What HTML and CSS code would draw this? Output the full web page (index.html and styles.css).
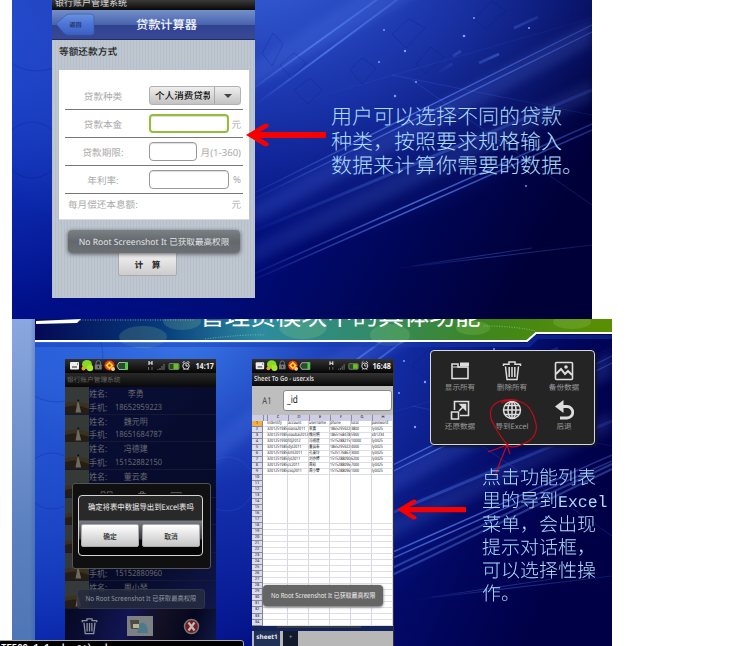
FILE: index.html
```html
<!DOCTYPE html>
<html lang="zh-CN">
<head>
<meta charset="utf-8">
<title>银行账户管理系统</title>
<link rel="stylesheet" href="styles.css">
</head>
<body>
<svg class="defs" width="0" height="0">
  <defs>
    <linearGradient id="beam" x1="0" y1="1" x2="1" y2="0"><stop offset="0" stop-color="#5f8cff" stop-opacity="0"/><stop offset=".5" stop-color="#5580f5" stop-opacity=".75"/><stop offset="1" stop-color="#5580ff" stop-opacity=".3"/></linearGradient>
    <filter id="soft" x="-20%" y="-20%" width="140%" height="140%"><feGaussianBlur stdDeviation="4"/></filter>
    <filter id="fine"><feGaussianBlur stdDeviation=".6"/></filter>
    <symbol id="rays" viewBox="0 0 580 319">
      <g filter="url(#soft)" fill="#6c95ff">
        <path d="M355-10H415L235 90L70 225V190L230 70Z" opacity=".16"/>
        <path d="M580 20V45L240 225V205Z" opacity=".15"/>
        <path d="M580 80V100L240 265V245Z" opacity=".13"/>
      </g>
      <g stroke="url(#beam)" fill="none" filter="url(#fine)">
        <path d="M243 87L370 -4M243 105L390 -4" stroke-width="2"/>
        <path d="M243 115L580 18" opacity=".15"/>
        <path d="M230 199L580 25M230 205L580 32" stroke-width="1.300"/>
        <path d="M230 279L580 124M230 285L580 130" stroke-width="1.500"/>
        <path d="M230 236L580 90" stroke-width="3" opacity=".5"/>
        <path d="M380 269L580 245M400 266L520 248" opacity=".5"/>
        <path d="M424 74L440 64M441 56L449 51M467 63L487 54M502 28L526 17" stroke-width="3" opacity=".6"/>
        <path d="M380 75L580 115M400 80L580 205" opacity=".25"/>
      </g>
      <g fill="none" stroke="#001070" opacity=".22">
        <path d="M250 53l11-20 10 11-11 22zM268 65l14-12 12 10-15 15zM282 90l16-12 12 12-14 14zM338 70l12-12 14 10-14 16zM380 34l17-15 16 9-19 20zM404 64l15-17 13 10-18 16zM462 19l17-18 15 10-20 18z"/>
        <circle cx="20" cy="150" r="28"/><circle cx="25" cy="25" r="46"/>
      </g>
      <g fill="#7da0ff"><circle cx="372" cy="30" r="1"/><circle cx="393" cy="51" r="1.200"/><circle cx="452" cy="36" r="1.300"/><circle cx="462" cy="18" r="1"/><circle cx="367" cy="62" r="1"/><circle cx="383" cy="96" r="1.200"/><circle cx="404" cy="82" r="1"/><circle cx="514" cy="186" r=".9"/><circle cx="517" cy="28" r="1"/></g>
    </symbol>
    <symbol id="arrow" viewBox="0 0 80 24">
      <path d="M0 12L18 1Q22-.5 23 3L21 5L14 9H80V15H14L21 19L23 21Q22 24.500 18 23Z" fill="#f80000"/>
    </symbol>
    <symbol id="trash" viewBox="0 0 20 20"><path d="M1.500 5V3.200H7V1H13V3.200H18.500V5M3.500 5.500L5 18.500H15L16.500 5.500M7.200 6V16M10 6V16M12.800 6V16" fill="none" stroke="currentColor" stroke-width="1.500"/></symbol>
    <symbol id="status" viewBox="0 0 151 14">
      <rect x="5" y="3" width="9" height="7.500" rx="1" fill="#eee"/><path d="M7 8h5M12 5h1" stroke="#222"/>
      <ellipse cx="22" cy="5.500" rx="5" ry="4.500" fill="#83db23"/><circle cx="25" cy="9" r="3.200" fill="#a6e72a"/><circle cx="18.500" cy="9.500" r="2" fill="#ff9b1a"/>
      <path d="M31 6V4a2.300 2.300 0 0 1 4.600 0V6" fill="none" stroke="#777"/><rect x="29.800" y="5.500" width="7" height="5" fill="#777"/><path d="M33.300 7v2" stroke="#111"/>
      <circle cx="44.500" cy="6.500" r="5" fill="#ef3b1c"/><path d="M44.500 2.500l4 4-4 4-4-4z" fill="#ffdf1e"/><circle cx="44.500" cy="6.500" r="1.300" fill="#cf2510"/><circle cx="48" cy="10" r="2" fill="#e4d590"/>
      <path d="M52 7l2-3.500h8.500v7H54z" fill="#284d2b" stroke="#ccc" stroke-width=".8"/><rect x="60" y="3.200" width="2.500" height="7.500" fill="#3fd23b"/>
      <path d="M84 2v4M87 2v4M84 4h3" stroke="#eee" stroke-width="1.100"/><path d="M83.500 8v3M87 8v3" stroke="#666"/>
      <path d="M93 11v-1M95 11v-2M97 11v-4M99 11v-6" stroke="#777"/>
      <rect x="104" y="4.500" width="10" height="6" rx="1" fill="#264d17" stroke="#999" stroke-width=".7"/><rect x="108.500" y="5" width="5" height="5" fill="#68bf27"/>
      <circle cx="121" cy="7" r="3.200" fill="none" stroke="#ddd"/><path d="M121 5v2h2M117.500 4l2-2M124.500 4l-2-2M118.500 11l1-1M123.500 11l-1-1" stroke="#ddd" fill="none"/>
    </symbol>
    <symbol id="photo" viewBox="0 0 24 27"><rect width="24" height="27" fill="#363a37"/><path d="M0 16Q10 13 24 17V27H0Z" fill="#3a311f"/><path d="M0 20Q12 16 24 22V27H0Z" fill="#241e14"/><path d="M12.700 14l1 1.500 2.500 10H10.500l1.500-8z" fill="#6d6a5f"/><circle cx="13.200" cy="13.500" r="1" fill="#090909"/></symbol>
  </defs>
</svg>

<main class="page">
  <section class="slide slide-loan">
    <svg class="backdrop"><use href="#rays" width="580" height="319"/></svg>
    <div class="loan-app">
      <div class="app-title">银行账户管理系统</div>
      <header class="nav">
        <div class="back">
          <svg width="41" height="24" viewBox="0 0 41 24"><defs><linearGradient id="bk" x2="0" y2="1"><stop stop-color="#6c91de"/><stop offset=".5" stop-color="#4b74d6"/><stop offset="1" stop-color="#3b60c4"/></linearGradient></defs><path d="M1 11L10 3Q12 1 15 1H36Q39 1 39 4V19Q39 22 36 22H14Q11 22 9 20Z" fill="url(#bk)" stroke="#395aa8" stroke-width=".7"/></svg>
          <span>返回</span>
        </div>
        <h1>贷款计算器</h1>
      </header>
      <h2>等额还款方式</h2>
      <div class="card">
        <div class="row first"><label>贷款种类</label><div class="select"><span>个人消费贷款</span><i><b></b></i></div></div>
        <div class="row"><label>贷款本金</label><div class="box active"></div><em>元</em></div>
        <div class="row"><label>贷款期限:</label><div class="box short"></div><em>月(1-360)</em></div>
        <div class="row"><label>年利率:</label><div class="box"></div><em>%</em></div>
        <div class="row last"><label>每月偿还本息额:</label><em>元</em></div>
      </div>
      <div class="toast toast-loan"><span>No Root Screenshot It 已获取最高权限</span></div>
      <div class="calc">计&emsp;算</div>
    </div>
    <svg class="arrow arrow-loan" viewBox="0 0 80 24"><use href="#arrow"/></svg>
    <p class="note note-loan">用户可以选择不同的贷款<br>种类，按照要求规格输入<br>数据来计算你需要的数据。</p>
  </section>

  <section class="slide slide-admin">
    <div class="rail"></div>
    <div class="admin">
      <svg class="backdrop" viewBox="0 0 577 327">
        <g transform="translate(-3 12)"><use href="#rays" width="580" height="319"/></g>
        <g stroke="#5885ee" opacity=".4" filter="url(#fine)" fill="none"><path d="M355 250L577 145M355 257L577 150" stroke-width="2"/><circle cx="192" cy="165" r="27" opacity=".4"/></g>
      </svg>
      <div class="banner">
        <svg width="577" height="32" viewBox="0 0 577 32">
          <defs><linearGradient id="bn"><stop stop-color="#040954"/><stop offset=".22" stop-color="#073b7c"/><stop offset=".39" stop-color="#2c8c9f"/><stop offset=".58" stop-color="#328b68"/><stop offset=".78" stop-color="#3f861d"/><stop offset="1" stop-color="#5b8f00"/></linearGradient></defs>
          <path d="M0 0H577V14H501L492 22H0Z" fill="url(#bn)"/>
          <g fill="#b9ed8c" opacity=".16"><ellipse cx="108" cy="18" rx="24" ry="11"/><ellipse cx="147" cy="2" rx="19" ry="9"/><ellipse cx="268" cy="8" rx="24" ry="12"/><ellipse cx="355" cy="16" rx="20" ry="11"/><ellipse cx="438" cy="9" rx="17" ry="7"/><ellipse cx="537" cy="3" rx="19" ry="7"/></g>
          <path d="M45 1H160M170 20Q210 15 230 16M449 7Q480 7 501 12" stroke="#b7e6bc" stroke-dasharray="1 1.500" opacity=".55" fill="none"/>
          <path d="M1 2L46 0L42 4L1 5Z" fill="#fff"/>
          <path d="M0 22H492L501 14H577" fill="none" stroke="#fff" stroke-width="2.200"/>
          <path d="M0 24H492L501 16H577V20H503L495 28H0Z" fill="#173caf" opacity=".45"/>
        </svg>
        <h2>管理员模块中的具体功能</h2>
      </div>

      <div class="phone contacts">
        <div class="status"><svg width="151" height="14"><use href="#status"/></svg><time>14:17</time></div>
        <div class="phone-title">银行账户管理系统</div>
        <ul>
          <li><svg><use href="#photo"/></svg><div><p>姓名:<b>李勇</b></p><p>手机:<i>18652959223</i></p></div></li>
          <li><svg><use href="#photo"/></svg><div><p>姓名:<b>魏元明</b></p><p>手机:<i>18651684787</i></p></div></li>
          <li><svg><use href="#photo"/></svg><div><p>姓名:<b>冯德建</b></p><p>手机:<i>15152882150</i></p></div></li>
          <li><svg><use href="#photo"/></svg><div><p>姓名:<b>董云泰</b></p></div></li>
          <li><svg><use href="#photo"/></svg></li>
          <li><svg><use href="#photo"/></svg></li>
          <li><svg><use href="#photo"/></svg><div><p>&nbsp;</p><p>手机:<i>15152880960</i></p></div></li>
          <li><svg><use href="#photo"/></svg><div><p>姓名:<b>周小琴</b></p></div></li>
        </ul>
        <div class="dock">
          <svg class="can" width="17" height="19"><use href="#trash"/></svg>
          <svg width="27" height="21" viewBox="0 0 27 21"><rect width="26" height="20" fill="#7c8284"/><path d="M3 4h9v9H4z" fill="#4e4a40"/><path d="M12 8q8-5 9 9H10z" fill="#4d7988"/><rect x="6" y="8" width="6" height="4" fill="#bbb49c"/></svg>
          <svg width="17" height="17" viewBox="0 0 17 17"><circle cx="8.500" cy="8.500" r="7" fill="#78191f" stroke="#777" stroke-width="1.500"/><path d="M5.500 4.500l6 8M11.500 4.500l-6 8" stroke="#bbb" stroke-width="2.200"/></svg>
        </div>
        <div class="panel">
          <svg width="138" height="14" viewBox="0 0 138 14" fill="none" stroke="#777"><path d="M17 12V10h5v2M25 12V10h6v2M64 12h10M67 12v-2h4v2M106 12v-1h13v1"/></svg>
          <div class="dialog">
            <p><span>确定将表中数据导出到Excel表吗</span></p>
            <div><button>确定</button><button>取消</button></div>
          </div>
        </div>
        <div class="toast toast-contacts"><span>No Root Screenshot It 已获取最高权限</span></div>
      </div>

      <div class="phone sheet">
        <div class="status"><svg width="151" height="14"><use href="#status"/></svg><time>16:48</time></div>
        <div class="phone-title"><span>Sheet To Go - user.xls</span></div>
        <div class="formula"><span>A1</span><div><b>_id</b></div></div>
        <div class="grid">
          <div class="heads"><span></span><span></span><span>C</span><span>D</span><span>E</span><span>F</span><span>G</span><span>H</span></div>
          <div class="body">
            <div class="nums"><b>1</b><b>2</b><b>3</b><b>4</b><b>5</b><b>6</b><b>7</b><b>8</b><b>9</b><b>10</b><b>11</b><b>12</b><b>13</b><b>14</b><b>15</b><b>16</b><b>17</b><b>18</b><b>19</b><b>20</b><b>21</b><b>22</b><b>23</b><b>24</b><b>25</b><b>26</b><b>27</b><b>28</b><b>29</b><b>30</b><b>31</b><b>32</b><b>33</b><b>34</b></div>
            <div class="cells">
              <div><span>indentify</span><span>account</span><span>username</span><span>phone</span><span>total</span><span>password</span></div>
              <div><span>3201251985</span><span>xiana2011</span><span>李勇</span><span>1865295922</span><span>3800</span><span>ly0425</span></div>
              <div><span>3201251985</span><span>xiaobai2012</span><span>魏元明</span><span>1865168478</span><span>5900</span><span>xb1234</span></div>
              <div><span>3201251990</span><span>fdj2012</span><span>冯德建</span><span>1515288215</span><span>10000</span><span>ly0425</span></div>
              <div><span>3201251985</span><span>dyt2011</span><span>董云泰</span><span>1865295922</span><span>4000</span><span>ly0425</span></div>
              <div><span>3201251985</span><span>kml2011</span><span>孔美玲</span><span>1525176867</span><span>3000</span><span>ly0425</span></div>
              <div><span>3201251985</span><span>lyt2011</span><span>刘亦婷</span><span>1515288090</span><span>6200</span><span>ly0425</span></div>
              <div><span>3201251985</span><span>zc2011</span><span>周彩</span><span>1515288096</span><span>7000</span><span>ly0425</span></div>
              <div><span>3201251985</span><span>zxq2011</span><span>周小琴</span><span>1515288096</span><span>1000</span><span>ly0425</span></div>
            </div>
          </div>
        </div>
        <div class="scroll"></div>
        <div class="tabs"><span>sheet1</span><i>+</i></div>
        <div class="toast toast-sheet"><span>No Root Screenshot It 已获取最高权限</span></div>
      </div>

      <div class="menu">
        <div><svg viewBox="0 0 20 20"><path d="M2 17.500V3H8V6H18V17.500Z" fill="none" stroke="currentColor" stroke-width="1.600"/><path d="M10 1.500H19V5H10Z" fill="currentColor"/><path d="M3 6H18" stroke="currentColor"/></svg><span>显示所有</span></div>
        <div><svg><use href="#trash"/></svg><span>删除所有</span></div>
        <div><svg viewBox="0 0 20 20"><rect x="1.500" y="1.500" width="17" height="17" rx="1" fill="none" stroke="currentColor" stroke-width="1.600"/><path d="M2 13l5-5 4 5 3-3 4 4" fill="none" stroke="currentColor" stroke-width="2"/><circle cx="12" cy="6" r="1.800" fill="currentColor"/></svg><span>备份数据</span></div>
        <div><svg viewBox="0 0 20 20" fill="none" stroke="currentColor" stroke-width="1.600"><path d="M4.500 10V1.500H18.500V15.500H10M1.500 12H8.500V19H1.500Z"/><path d="M9 11l5-5"/><path d="M10.500 4.500H15.500V9.500Z" fill="currentColor"/></svg><span>还原数据</span></div>
        <div><svg viewBox="0 0 20 20" fill="none" stroke="currentColor" stroke-width="1.500"><circle cx="10" cy="10" r="8.500"/><ellipse cx="10" cy="10" rx="4" ry="8.500"/><path d="M10 1V19M1 10H19M3 5.500H17M3 14.500H17"/></svg><span>导到Excel</span></div>
        <div><svg viewBox="0 0 20 20"><path d="M1 6.500L9.500 0V13Z" fill="currentColor"/><path d="M8 6.500h5a5.300 5.300 0 0 1 0 11.500H6" fill="none" stroke="currentColor" stroke-width="2.800"/></svg><span>后退</span></div>
      </div>
      <svg class="scribble" width="60" height="85" viewBox="0 0 60 85" fill="none" stroke="#c50a18" stroke-width="1.200"><path d="M31 1Q12-1 6 8Q2 17 8 26Q16 41 23 47Q29 50 43 42Q52 35 50 25Q46 7 35 3Q24-1 15 4M21 46Q15 60 9 77M2 53L21 46L24 55"/></svg>
      <svg class="arrow arrow-admin" viewBox="0 0 80 24" preserveAspectRatio="none"><use href="#arrow"/></svg>
      <p class="note note-admin">点击功能列表<br>里的导到<span>Excel</span><br>菜单，会出现<br>提示对话框，<br>可以选择性操<br>作。</p>
    </div>
  </section>
  <div class="taskbar">TF500-1-1  |  e:\  |</div>
</main>
</body>
</html>
```
FILE: styles.css
```css
* { box-sizing: border-box; }
body, h1, h2, p, ul { margin: 0; padding: 0; }
body { width: 741px; height: 646px; overflow: hidden; background: #fff; font-family: "Noto Sans", "Noto Sans CJK SC", sans-serif; text-rendering: geometricPrecision; }
i, em { font-style: normal; }
.defs { position: absolute; }
.page { position: relative; height: 646px; overflow: hidden; }
.slide { position: relative; margin-left: 12px; overflow: hidden; }
.backdrop { position: absolute; left: 0; top: 0; width: 100%; height: 100%; }

.slide-loan { width: 580px; height: 319px; padding-left: 40px; background: radial-gradient(ellipse 420px 300px at 230px -50px, #3a66de 0, #2646c0cc 45%, transparent 100%), radial-gradient(ellipse 200px 290px at 0 20px, #1f50dc, transparent), linear-gradient(120deg, #00129a 0, #000c78 50%, #000038 88%); }
.loan-app { position: relative; display: flex; flex-direction: column; width: 203px; height: 298px; background: repeating-linear-gradient(90deg, #b6bfca 0 1px, #bec6d0 1px 3px); color: #222; }
.app-title { height: 10px; padding-left: 3px; background: linear-gradient(#3a3a3a, #080808); color: #ddd; font-size: 9px; line-height: 5px; }
.nav { display: flex; align-items: center; height: 30px; padding-left: 3px; background: linear-gradient(#7390cb 0, #4964ad 50%, #31438f 51%, #364897); border-bottom: 1px solid #222d59; }
.back { display: grid; width: 40px; height: 24px; place-items: center; }
.back > * { grid-area: 1 / 1; }
.back span { color: #17264f; font-size: 6px; font-weight: 500; z-index: 1; }
.nav h1 { margin-left: 41px; color: #f3f5fb; font-size: 12.2px; font-weight: 500; line-height: 26px; white-space: nowrap; }
.loan-app h2 { height: 30px; padding-left: 7px; font-size: 9.7px; font-weight: 500; line-height: 24px; }
.card { width: 190px; height: 150px; margin-left: 7px; padding: 12px 6px 0; background: #fff; border-bottom: 1px solid #d5dce2; }
.row { display: grid; grid-template-columns: 84px auto 1fr; align-items: center; height: 28px; border-bottom: 1.5px solid #777; color: #aaa; font-size: 9.6px; }
.row label { padding-right: 8px; text-align: center; }
.row em { padding-right: 2px; text-align: right; }
.row.last { grid-template-columns: auto 1fr; height: 19px; border: 0; }
.row.last label { padding-left: 3px; text-align: left; }
.box { width: 80px; height: 19px; border: 1px solid #999; border-radius: 4px; background: #fff; box-shadow: inset 0 1px 1px #ddd; }
.box.active { border: 2px solid #93bf38; }
.box.short { width: 48px; }
.select { display: flex; width: 92px; height: 19px; overflow: hidden; border: 1px solid #b2b2b2; border-radius: 3px; background: linear-gradient(#eee, #c3c3c3); color: #111; font-size: 9.6px; font-weight: 500; line-height: 18px; }
.select span { width: 60px; padding-left: 5px; overflow: hidden; white-space: nowrap; }
.select i { display: grid; flex: 1; margin-left: 4px; place-items: center; border-left: 1px solid #aaa; }
.select b { border: 4px solid transparent; border-top-color: #444; border-bottom: 0; }
.toast { display: flex; align-items: center; justify-content: center; border-radius: 4px; white-space: nowrap; }
.toast-loan { z-index: 1; width: 172px; height: 23px; margin: 10px 0 0 16px; background: linear-gradient(#7b8084, #63686c 50%, #6b7074); box-shadow: 0 1px 4px #555; color: #e2e5e8; font-size: 8.6px; }
.calc { width: 59px; height: 25px; margin: -2px 0 0 66px; border: 1px solid #aaa; border-radius: 2px; background: linear-gradient(#f5f5f5, #ccc); font-size: 8.7px; font-weight: 700; line-height: 26px; text-align: center; }
.arrow { position: absolute; overflow: visible; }
.arrow-loan { left: 234px; top: 123px; width: 80px; height: 24px; }
.note { position: absolute; color: #abdcfa; font-family: "Noto Sans CJK SC", sans-serif; font-weight: 300; white-space: nowrap; }
.note-loan { left: 319px; top: 104px; font-size: 21px; line-height: 24.5px; }

.slide-admin { display: flex; width: 600px; height: 327px; }
.rail { width: 23px; background: linear-gradient(90deg, transparent 18px, #284c8c44), linear-gradient(#8ba7df, #5b80bf 65%, #4e75b5); }
.admin { position: relative; flex: 1; padding: 0 0 0 30px; background: radial-gradient(ellipse 380px 320px at 150px 10px, #3977e8, #244ac588 50%, transparent), radial-gradient(ellipse 200px 360px at 0 40px, #2970ed, transparent), linear-gradient(115deg, #0416a4 0, #04148f 45%, #000047 88%); display: flex; align-items: flex-start; }
.banner { position: absolute; left: 0; top: 0; width: 577px; height: 32px; overflow: hidden; }
.banner h2 { position: absolute; left: 164px; top: -23px; color: #fff; font: 400 25.6px/38px "Noto Sans CJK SC", sans-serif; white-space: nowrap; }
.phone { position: relative; height: 287px; margin-top: 40px; overflow: hidden; }
.status { display: flex; position: relative; height: 14px; background: linear-gradient(#333, #050505); }
.status time { margin-left: auto; padding-right: 2px; color: #eee; font-size: 8.4px; font-weight: 700; line-height: 15px; transform: scaleX(.85); transform-origin: right; }
.status svg { position: absolute; left: 0; }
.contacts { width: 151px; background: #070b2e; }
.contacts .phone-title { height: 14px; padding-left: 2px; background: linear-gradient(#292929, #080808); color: #686868; font-size: 6.7px; line-height: 13px; }
.contacts ul { height: 222px; overflow: hidden; list-style: none; background: linear-gradient(135deg, #090e38, #060b29 70%, #10184c); }
.contacts li { display: flex; height: 27.7px; border-bottom: 1px solid #151933; color: #66676b; font-size: 9.2px; }
.contacts li svg { width: 24px; height: 27px; flex: none; }
.contacts li div { width: 145px; flex: none; transform: scaleX(.87); transform-origin: left; }
.contacts li p { display: flex; height: 13.8px; line-height: 13px; }
.contacts li b { width: 56px; margin-left: 5px; text-align: center; font-weight: 400; }
.contacts li i { margin-left: 9px; font-size: 8.6px; }
.dock { display: flex; align-items: center; justify-content: space-between; height: 37px; padding: 0 16px 3px; background: linear-gradient(110deg, #050820, #111552 40%, #141024 60%, #05071e 80%, #12194a); }
.can { color: #8e9198; }
.panel { position: absolute; left: 7px; top: 124px; width: 139px; height: 86px; border: 1.5px solid #555; border-radius: 3px; background: #101010; }
.panel > svg { display: block; height: 11px; }
.dialog { position: relative; width: 125px; height: 61px; margin: 0 0 0 5px; padding: 1px; border: 1.5px solid #d5d5d5; border-radius: 4px; background: linear-gradient(#292929 0 24px, #777c84 25px, #34363b 43px, #050505 44px); }
.dialog p { display: flex; justify-content: center; height: 26px; color: #eee; font-size: 8.2px; line-height: 21px; white-space: nowrap; }
.dialog p span { transform: scaleX(.9); }
.dialog div { display: flex; gap: 3px; padding: 1px 1px 0; }
.dialog button { flex: 1; height: 23px; padding: 0; border: 1px solid #aaa; border-radius: 2px; background: linear-gradient(#fff, #c5c5c5); color: #222; font: 500 6.7px "Noto Sans CJK SC", sans-serif; }
.toast-contacts span { transform: scaleX(.88); }
.toast-contacts { position: absolute; left: 12px; top: 230px; width: 128px; height: 20px; background: #262b3fd9; border: 1px solid #45495777; color: #9297a0; font-size: 7.2px; }

.sheet { width: 142px; margin-left: 36px; background: #fff; border-right: 1px solid #333; }
.sheet .status svg { left: -1px; width: 142px; }
.sheet .phone-title { height: 13px; padding-left: 2px; background: linear-gradient(#333, #080808); color: #ddd; font-size: 7.1px; font-weight: 600; line-height: 13px; white-space: nowrap; }
.sheet .phone-title span { display: block; transform: scaleX(.83); transform-origin: left; }
.formula { display: flex; align-items: center; height: 29px; padding-right: 1px; background: #bebebe; color: #444; font-size: 9.5px; }
.formula span { width: 31px; padding-left: 9px; transform: scaleX(.8); }
.formula div { flex: 1; height: 21px; padding-left: 3px; border: 1px solid #888; border-radius: 3px; background: #fff; color: #222; font-size: 10.5px; line-height: 18px; }
.formula b { display: block; font-weight: 400; transform: scaleX(.78); transform-origin: left; }
.grid { height: 211px; overflow: hidden; }
.heads { display: grid; grid-template-columns: 12px 4px repeat(6, 21px); height: 6px; background: #cdcde5; font-size: 4px; line-height: 6px; text-align: center; }
.heads span { border-right: 1px solid #8d8da7; }
.body { display: flex; }
.nums { width: 12px; background: #dcdcf0; border-right: 1px solid #888; }
.nums b { display: block; height: 6.03px; border-bottom: .8px solid #88889a; color: #333; font-size: 4px; font-weight: 500; line-height: 5.5px; text-align: center; }
.nums b:first-child { background: #f6ad3d; }
.cells { flex: none; width: 130px; height: 205px; padding-left: 4px; background: repeating-linear-gradient(transparent 0 5.23px, #dedee8 5.23px 6.03px), repeating-linear-gradient(90deg, transparent 0 20px, #d6d6e5 20px 21px) 4px 0, #fff; }
.cells div { display: grid; grid-template-columns: repeat(6, 26.9px); width: 162px; height: 6.03px; color: #222; font-size: 4.6px; line-height: 5.6px; white-space: nowrap; transform: scaleX(.78); transform-origin: left; }
.scroll { height: 5px; background: linear-gradient(90deg, transparent 25px, #333b43 25px 109px, transparent 109px) 0 0 / 100% 2px no-repeat, #142458; }
.tabs { display: flex; gap: 3px; height: 15px; padding-left: 2px; background: #b7b7b7; color: #eee; font-size: 6.4px; font-weight: 700; line-height: 11px; }
.tabs span { width: 26px; background: #203158; text-align: center; }
.tabs i { width: 15px; background: #12192b; color: #888; text-align: center; }
.toast-sheet { position: absolute; left: 11px; top: 226px; width: 120px; height: 21px; background: #656565; box-shadow: 0 1px 3px #555; color: #eee; font-size: 7.1px; }
.toast-sheet span { transform: scaleX(.84); }

.menu { display: grid; grid-template-columns: repeat(3, 52px); grid-auto-rows: 39px; width: 165px; height: 95px; margin: 31px 0 0 36px; padding: 10px 3px; border: 1.5px solid #d9d9d9; border-radius: 4px; background: #242424; box-shadow: 2px 2px 3px #10132b; color: #ddd; position: relative; }
.menu div { display: flex; flex-direction: column; align-items: center; }
.menu svg { width: 20px; height: 20px; }
.menu span { color: #999; font-size: 7.6px; line-height: 15px; white-space: nowrap; }
.scribble { position: absolute; left: 451px; top: 80px; }
.arrow-admin { left: 362px; top: 180px; width: 69px; height: 21px; }
.note-admin { left: 447px; top: 146px; font-size: 19px; line-height: 23px; }
.note-admin span { font-family: "Liberation Mono", monospace; font-size: 16.5px; line-height: 1; }
.taskbar { position: absolute; left: -2px; bottom: -12px; width: 246px; height: 18px; padding-left: 2px; border: 1px solid #aaa; border-radius: 3px; background: #000; color: #fff; font: 700 9px/14px "Liberation Mono", monospace; white-space: pre; }
```
